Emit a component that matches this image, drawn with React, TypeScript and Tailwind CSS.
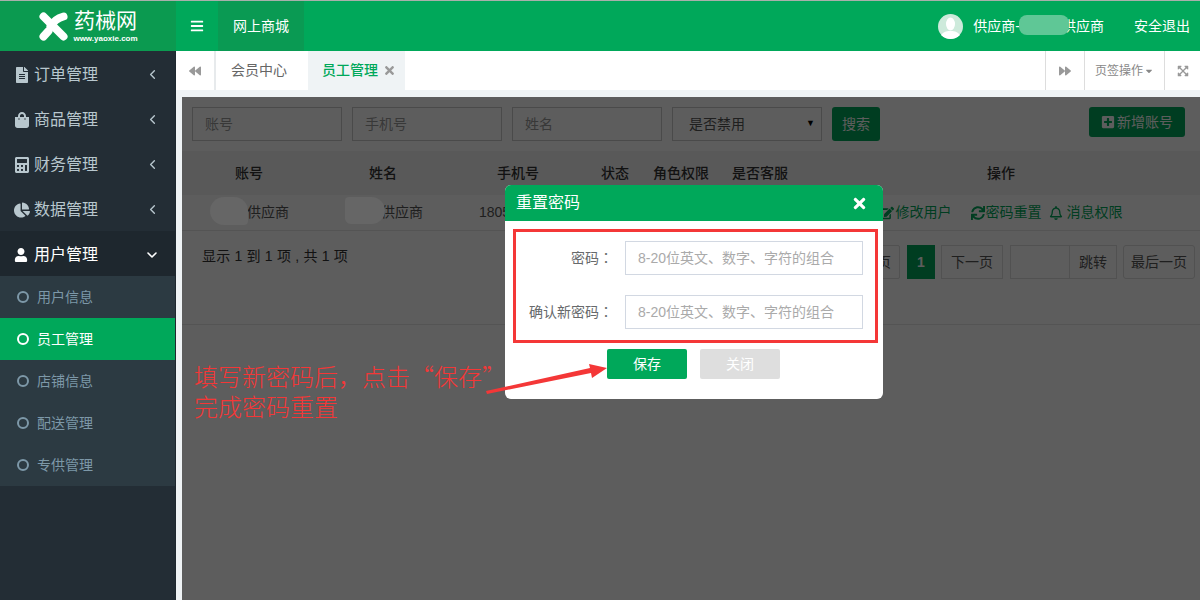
import React from "react";
import {
  FaFileAlt, FaShoppingBag, FaCalculator, FaChartPie, FaUser, FaBars,
  FaTimes, FaBackward, FaForward, FaExpandArrowsAlt, FaPlusSquare, FaEdit, FaSync, FaRegBell, FaCaretDown,
} from "react-icons/fa";
import { ChevronLeft, ChevronDown } from "lucide-react";

const menu = [
  { label: "订单管理", icon: <FaFileAlt className="text-[16px]" /> },
  { label: "商品管理", icon: <FaShoppingBag className="text-[16px]" /> },
  { label: "财务管理", icon: <FaCalculator className="text-[16px]" /> },
  { label: "数据管理", icon: <FaChartPie className="text-[16px]" /> },
];
const sub = ["用户信息", "员工管理", "店铺信息", "配送管理", "专供管理"];
const cols = "grid grid-cols-[134px_134px_136px_58px_74px_84px_1fr] items-center text-center";

function Logo() {
  return (
    <div className="flex w-[176px] shrink-0 items-center justify-center gap-[6px] bg-[#0b9a50] text-white">
      <svg width="29" height="29" viewBox="0 0 29 29">
        <path d="M4.5 4.5 L24.5 24.5" stroke="#fff" strokeWidth="8" strokeLinecap="round" />
        <path d="M24.5 4.5 C19 6 14 10 11.5 14.5" stroke="#fff" strokeWidth="8" strokeLinecap="round" fill="none" />
        <path d="M9.5 19 L4.5 24.5" stroke="#fff" strokeWidth="8" strokeLinecap="round" />
      </svg>
      <div className="flex w-[64px] flex-col items-center">
        <span className="text-[21px] leading-[24px]">药械网</span>
        <span className="mt-[1px] whitespace-nowrap text-[8px] leading-[9px] font-bold">www.yaoxie.com</span>
      </div>
    </div>
  );
}

function Sidebar() {
  return (
    <aside className="flex w-[176px] shrink-0 flex-col border-r border-[#1f282f] bg-[#232d35]">
      {menu.map((m) => (
        <div key={m.label} className="flex h-[45px] items-center pl-[14px] pr-[15px] pt-[2px] text-[16px] text-[#b8c7ce]">
          <span className="flex w-[20px]">{m.icon}</span>
          <span>{m.label}</span>
          <ChevronLeft size={15} strokeWidth={2.2} className="ml-auto" />
        </div>
      ))}
      <div className="flex h-[45px] items-center bg-[#1e272e] pl-[14px] pr-[15px] pt-[2px] text-[16px] text-white">
        <span className="flex w-[20px]"><FaUser className="text-[14px]" /></span>
        <span>用户管理</span>
        <ChevronDown size={16} strokeWidth={2.4} className="ml-auto" />
      </div>
      <div className="bg-[#2c3a42]">
        {sub.map((s, i) => (
          <div
            key={s}
            className={
              i === 1
                ? "flex h-[42px] items-center bg-[#00a85a] pl-[17px] text-[14px] text-white"
                : "flex h-[42px] items-center pl-[17px] text-[14px] text-[#7d98a8]"
            }
          >
            <span className={i === 1 ? "mr-[8px] h-[12px] w-[12px] rounded-full border-2 border-white" : "mr-[8px] h-[12px] w-[12px] rounded-full border-2 border-[#7d98a8]"} />
            {s}
          </div>
        ))}
      </div>
    </aside>
  );
}

function Tabs() {
  return (
    <div className="flex h-[39px] shrink-0 items-stretch bg-white text-[14px] text-[#888]">
      <div className="flex w-[40px] items-center justify-center border-r-2 border-[#e7eaec] text-[#999]"><FaBackward className="text-[12px]" /></div>
      <div className="flex w-[92px] items-center pl-[15px] text-[#666]">会员中心</div>
      <div className="flex w-[97px] items-center gap-[5px] bg-[#eff3f5] pl-[14px] font-medium text-[#00a85a]">
        员工管理<FaTimes className="text-[13px] text-[#999]" />
      </div>
      <div className="ml-auto flex w-[40px] items-center justify-center border-x border-[#ddd] text-[#999]"><FaForward className="text-[12px]" /></div>
      <div className="flex w-[80px] items-center justify-center gap-[1px] border-r border-[#ddd] text-[12px]">页签操作<FaCaretDown className="text-[10px]" /></div>
      <div className="flex w-[35px] items-center justify-center text-[#999]"><FaExpandArrowsAlt className="text-[12px]" /></div>
    </div>
  );
}

function Page() {
  return (
    <div className="flex h-full flex-col bg-white text-[14px] text-[#555]">
      <div className="flex h-[54px] shrink-0 items-start gap-[10px] pl-[10px] pr-[15px] pt-[10px]">
        {["账号", "手机号", "姓名"].map((p) => (
          <div key={p} className="flex h-[34px] w-[150px] items-center border border-[#ccc] pl-[12px] text-[#999]">{p}</div>
        ))}
        <div className="flex h-[34px] w-[150px] items-center justify-between border border-[#ccc] pl-[16px] pr-[6px] text-[#555]">
          是否禁用<span className="text-[9px] text-black">▼</span>
        </div>
        <div className="flex h-[34px] w-[48px] items-center justify-center rounded-[3px] bg-[#00a85a] text-white">搜索</div>
        <div className="ml-auto flex h-[30px] w-[96px] items-center justify-center gap-[2px] rounded-[3px] bg-[#00a85a] text-white">
          <FaPlusSquare className="text-[14px]" />新增账号
        </div>
      </div>
      <div className={`${cols} h-[44px] shrink-0 bg-[#f3f3f3] font-medium text-[#333]`}>
        {["账号", "姓名", "手机号", "状态", "角色权限", "是否客服", "操作"].map((h) => <div key={h}>{h}</div>)}
      </div>
      <div className={`${cols} h-[36px] shrink-0 border-b border-[#e7e7e7]`}>
        <div className="pl-[38px]">供应商</div>
        <div className="pl-[38px]">供应商</div>
        <div className="pl-[29px] text-left">1805</div>
        <div />
        <div />
        <div />
        <div className="flex items-center justify-center text-[#00a85a]">
          <span className="flex items-center gap-[2px]"><FaEdit />修改用户</span>
          <span className="ml-[19px] flex items-center gap-[1px]"><FaSync />密码重置</span>
          <span className="ml-[7px] flex items-center gap-[4px]"><FaRegBell />消息权限</span>
        </div>
      </div>
      <div className="flex h-[94px] shrink-0 items-start justify-between border-b border-[#e7e7e7] pl-[20px] pr-[5px] pt-[14px]">
        <div className="pt-[1px] tracking-[0.2px] text-[#333]">显示 1 到 1 项 , 共 1 项</div>
        <div className="flex items-start text-[14px]">
          <div className="flex h-[34px] w-[60px] items-center justify-center rounded-[2px] border border-[#ddd]">上一页</div>
          <div className="ml-[7px] flex h-[34px] w-[28px] items-center justify-center bg-[#00a85a] font-bold text-white">1</div>
          <div className="ml-[6px] flex h-[34px] w-[62px] items-center justify-center border border-[#ddd]">下一页</div>
          <div className="ml-[7px] flex h-[34px] w-[107px] border border-[#ddd]">
            <div className="w-[59px] border-r border-[#ddd]" />
            <div className="flex flex-1 items-center justify-center">跳转</div>
          </div>
          <div className="ml-[6px] flex h-[34px] w-[72px] items-center justify-center rounded-[3px] border border-[#ddd]">最后一页</div>
        </div>
      </div>
    </div>
  );
}

function Modal() {
  const field = "ml-[12px] flex h-[34px] w-[238px] items-center border border-[#d2d8e2] bg-white pl-[12px] text-[14px] text-[#aaa]";
  const label = "w-[97px] whitespace-nowrap text-right font-['Liberation_Sans','Noto_Sans_CJK_TC',sans-serif]";
  return (
    <div className="absolute left-[323px] top-[88px] h-[214px] w-[378px] overflow-hidden rounded-[6px] bg-white">
      <div className="flex h-[36px] items-center justify-between bg-[#00a85a] pl-[11px] pr-[15px] text-[16px] text-white">
        重置密码<FaTimes className="text-[17px]" />
      </div>
      <div className="mx-[8px] mt-[8px] flex h-[114px] w-[365px] flex-col gap-[20px] border-[3px] border-[#f43737] pt-[9px] text-[14px] text-[#676a6c]">
        <div className="flex items-center">
          <div className={label}>密码：</div>
          <div className={field}>8-20位英文、数字、字符的组合</div>
        </div>
        <div className="flex items-center">
          <div className={label}>确认新密码：</div>
          <div className={field}>8-20位英文、数字、字符的组合</div>
        </div>
      </div>
      <div className="mt-[6px] flex gap-[13px] pl-[102px] text-[14px] text-white">
        <div className="flex h-[30px] w-[80px] items-center justify-center rounded-[2px] bg-[#00a85a]">保存</div>
        <div className="flex h-[30px] w-[80px] items-center justify-center rounded-[2px] bg-[#dedede]">关闭</div>
      </div>
    </div>
  );
}

export default function App() {
  return (
    <div className="flex h-[600px] w-[1200px] flex-col overflow-hidden bg-[#232d35] font-['Liberation_Sans','Noto_Sans_CJK_SC',sans-serif]">
      <header className="flex h-[51px] shrink-0 border-t border-[#a8b0ab] bg-[#00a85a] text-[14px] text-white">
        <Logo />
        <div className="flex w-[42px] items-center justify-center"><FaBars className="text-[14px]" /></div>
        <div className="flex w-[86px] items-center justify-center bg-[#0a9a53]">网上商城</div>
        <div className="relative ml-auto flex items-center pr-[10px]">
          <svg width="25" height="25" viewBox="0 0 25 25" className="mr-[10px]">
            <circle cx="12.5" cy="12.5" r="12.5" fill="#cdeadb" />
            <ellipse cx="12.5" cy="10" rx="4.5" ry="6.5" fill="#fff" />
            <path d="M3 21 C6 17 10 17 12.5 17 C15 17 19 17 22 21 C19 24 15 25 12.5 25 C10 25 6 24 3 21Z" fill="#fff" />
          </svg>
          <span className="flex whitespace-nowrap">供应商-<span className="w-[42px]" />供应商</span>
          <span className="ml-[30px]">安全退出</span>
          <div className="absolute left-[81px] top-[14px] h-[20px] w-[50px] rounded-[8px] bg-[#5fc796]" />
        </div>
      </header>
      <div className="flex min-h-0 flex-1">
        <Sidebar />
        <main className="flex min-w-0 flex-1 flex-col bg-[#eff3f5]">
          <Tabs />
          <div className="relative ml-[6px] mt-[7px] flex-1 overflow-hidden">
            <Page />
            <div className="absolute inset-0 bg-black/[0.635]" />
            <div className="absolute left-[28px] top-[100px] h-[28px] w-[38px] rounded-[14px_14px_4px_14px] bg-[#666]" />
            <div className="absolute left-[163px] top-[100px] h-[27px] w-[40px] rounded-[4px_14px_14px_6px] bg-[#666]" />
            <Modal />
            <svg className="absolute left-[300px] top-[260px]" width="130" height="40" viewBox="0 0 130 40">
              <polygon points="4,34 108,11 107,7 125,11 110,21 109,16 5,37" fill="#f43737" />
            </svg>
            <div className="absolute left-[12px] top-[264px] whitespace-nowrap text-[24px] leading-[30px] text-[#f43737] font-light font-['Noto_Sans_CJK_SC',sans-serif]">
              填写新密码后，点击“保存”<br />完成密码重置
            </div>
          </div>
        </main>
      </div>
    </div>
  );
}
